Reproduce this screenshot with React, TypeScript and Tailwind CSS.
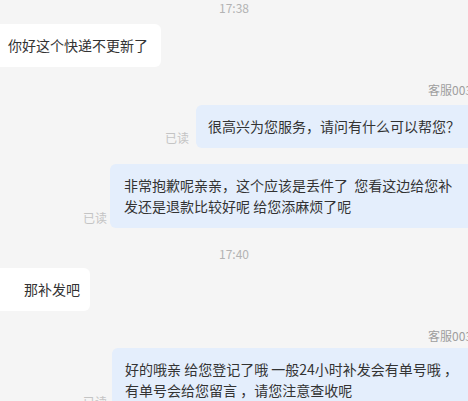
const font = {
	fontFamily: '"Noto Sans CJK SC", "Noto Sans", sans-serif',
};

function TimeStamp({ time, className }: { time: string; className: string }) {
	return (
		<div className={`h-4 text-center text-xs leading-4 text-[#b3b3b3] ${className}`}>
			{time}
		</div>
	);
}

function AgentName({ className }: { className: string }) {
	return (
		<div className={`h-4 overflow-hidden whitespace-nowrap pl-[428px] text-xs leading-4 text-[#9e9e9e] ${className}`}>
			客服003
		</div>
	);
}

function ReadMark() {
	return (
		<span className="mb-[2px] shrink-0 text-xs leading-4 text-[#c4c4c4]">已读</span>
	);
}

export default function App() {
	return (
		<div
			className="h-[401px] w-[468px] overflow-hidden bg-[#f5f5f5] text-[14px] text-[#333333]"
			style={font}
		>
			<TimeStamp time="17:38" className="" />

			{/* customer */}
			<div className="mt-2 w-fit rounded-r-md bg-white py-[11px] pl-2 pr-[13px] leading-[21px]">
				你好这个快递不更新了
			</div>

			<AgentName className="mt-[15px]" />

			<div className="mt-[7px] flex items-end gap-[7px] pl-[165px]">
				<ReadMark />
				<div className="flex-1 whitespace-nowrap rounded-l-md bg-[#e4eefc] py-[11px] pl-3 leading-[21px]">
					很高兴为您服务，请问有什么可以帮您？
				</div>
			</div>

			<div className="mt-4 flex items-end gap-[3px] pl-[83px]">
				<ReadMark />
				<div className="flex-1 whitespace-nowrap rounded-l-md bg-[#e4eefc] py-[11px] pl-[14px] leading-[21px]">
					<div>非常抱歉呢亲亲，这个应该是丢件了&nbsp;&nbsp;您看这边给您补</div>
					<div>发还是退款比较好呢 给您添麻烦了呢</div>
				</div>
			</div>

			<TimeStamp time="17:40" className="mt-[18px]" />

			{/* customer */}
			<div className="mt-[6px] w-fit rounded-r-md bg-white py-[11px] pl-6 pr-[10px] leading-[21px]">
				那补发吧
			</div>

			<AgentName className="mt-[17px]" />

			<div className="mt-1 flex items-end gap-[5px] pl-[83px]">
				<ReadMark />
				<div className="flex-1 whitespace-nowrap rounded-l-md bg-[#e4eefc] py-[11px] pl-[13px] leading-[21px]">
					<div>好的哦亲 给您登记了哦 一般24小时补发会有单号哦 ，</div>
					<div>有单号会给您留言 ，请您注意查收呢</div>
				</div>
			</div>
		</div>
	);
}
